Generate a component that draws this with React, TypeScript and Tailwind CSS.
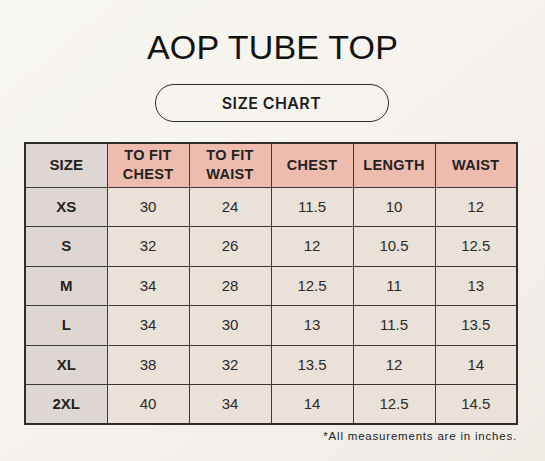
import React from 'react';

const rows = [
  ['XS', '30', '24', '11.5', '10', '12'],
  ['S', '32', '26', '12', '10.5', '12.5'],
  ['M', '34', '28', '12.5', '11', '13'],
  ['L', '34', '30', '13', '11.5', '13.5'],
  ['XL', '38', '32', '13.5', '12', '14'],
  ['2XL', '40', '34', '14', '12.5', '14.5'],
];

const headers = ['TO FIT\nCHEST', 'TO FIT\nWAIST', 'CHEST', 'LENGTH', 'WAIST'];

const App: React.FC = () => {
  return (
    <div
      className="w-[545px] h-[461px] bg-gradient-to-br from-[#f8f6f1] via-[#f6f3ee] to-[#eeeae4] flex flex-col items-center"
      style={{ fontFamily: '"Liberation Sans", Arial, sans-serif' }}
    >
      <h1 className="mt-[27px] text-[34px] leading-[40px] text-[#111] tracking-[0.2px]">AOP TUBE TOP</h1>

      <div className="mt-[17px] -ml-[2px] w-[234px] h-[38px] rounded-full border-[1.5px] border-[#2a2a2a] flex items-center justify-center">
        <span className="text-[16px] font-semibold text-[#1d1d1d] tracking-[0.4px]" style={{ fontFamily: 'Inter, sans-serif' }}>
          SIZE CHART
        </span>
      </div>

      {/* size table */}
      <table className="self-start ml-[24px] mt-[20px] w-[494px] table-fixed border-collapse border-[2px] border-[#2e2e2e] text-[#222]">
        <thead>
          <tr className="h-[44px]">
            <th className="bg-[#ded6d2] border-[1.5px] border-[#3a3a3a] text-[15px] font-bold">SIZE</th>
            {headers.map((h) => (
              <th
                key={h}
                className="bg-[#eebcaf] border-[1.5px] border-[#3a3a3a] text-[14.5px] font-bold leading-[19px] whitespace-pre-line tracking-[0.3px]"
              >
                {h}
              </th>
            ))}
          </tr>
        </thead>
        <tbody>
          {rows.map((r) => (
            <tr key={r[0]} className="h-[39.5px]">
              <td className="bg-[#ded6d2] border-[1.5px] border-[#3a3a3a] text-center text-[15px] font-bold">{r[0]}</td>
              {r.slice(1).map((v, i) => (
                <td key={i} className="bg-[#eae2d8] border-[1.5px] border-[#3a3a3a] text-center text-[15px] text-[#2a2a2a]">
                  {v}
                </td>
              ))}
            </tr>
          ))}
        </tbody>
      </table>

      <p className="self-end mr-[28px] mt-[3px] text-[11.5px] tracking-[0.8px] text-[#222]">*All measurements are in inches.</p>
    </div>
  );
};

export default App;
